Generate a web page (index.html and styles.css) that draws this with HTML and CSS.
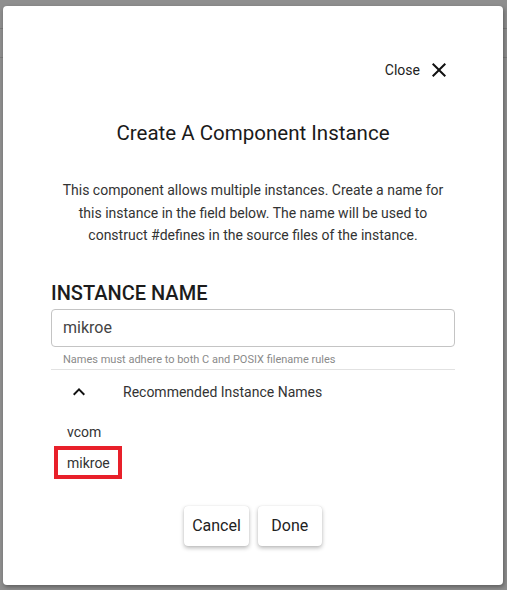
FILE: index.html
```html
<!DOCTYPE html>
<html>
<head>
<meta charset="utf-8">
<link rel="stylesheet" href="styles.css">
</head>
<body>
<div class="backdrop">
  <div class="modal">
    <div class="close-row">
      <button class="close-btn">
        <span>Close</span>
        <svg viewBox="0 0 24 24" width="24" height="24"><path d="M19 6.41L17.59 5 12 10.59 6.41 5 5 6.41 10.59 12 5 17.59 6.41 19 12 13.41 17.59 19 19 17.59 13.41 12z"/></svg>
      </button>
    </div>
    <h1 class="title">Create A Component Instance</h1>
    <p class="desc">This component allows multiple instances. Create a name for this instance in the field below. The name will be used to construct #defines in the source files of the instance.</p>
    <h2 class="label">INSTANCE NAME</h2>
    <div class="input">mikroe</div>
    <div class="helper">Names must adhere to both C and POSIX filename rules</div>
    <div class="divider"></div>
    <div class="rec-head">
      <svg class="chev" viewBox="0 0 24 24" width="24" height="24"><path d="M12 8l-6 6 1.41 1.41L12 10.83l4.59 4.58L18 14z"/></svg>
      <span>Recommended Instance Names</span>
    </div>
    <ul class="names">
      <li class="name">vcom</li>
      <li class="name marked">mikroe</li>
    </ul>
    <div class="actions">
      <button class="btn">Cancel</button>
      <button class="btn">Done</button>
    </div>
  </div>
</div>
</body>
</html>
```

FILE: styles.css
```css
* { box-sizing: border-box; }
html, body { margin: 0; padding: 0; }
body {
  font-family: Roboto, "Noto Sans", sans-serif;
  background: #8e8e8e;
  width: 507px;
  height: 590px;
  overflow: hidden;
}
.backdrop {
  width: 507px;
  height: 590px;
  padding: 6px 0 0 3px;
  background:
    linear-gradient(#7a7a7a, #7a7a7a) 0 28px / 507px 1px no-repeat,
    linear-gradient(#7c7c7c, #7c7c7c) 0 57px / 507px 1px no-repeat,
    #8f8f8f;
}
.modal {
  width: 500px;
  height: 579px;
  background: #fff;
  border-radius: 4px;
  box-shadow: 1px 2px 4px rgba(0,0,0,0.35);
  padding: 0 48px;
  display: flex;
  flex-direction: column;
}
.close-row {
  display: flex;
  justify-content: flex-end;
  margin-top: 52px;
  padding-right: 4px;
}
.close-btn {
  border: 0;
  background: none;
  padding: 0;
  display: flex;
  align-items: center;
  gap: 7px;
  font-family: inherit;
  font-size: 14px;
  color: #222;
  height: 24px;
}
.close-btn svg { fill: #111; }
.title {
  margin: 39px 0 0;
  text-align: center;
  font-size: 20.5px;
  font-weight: 400;
  color: #1a1a1a;
  line-height: 24px;
}
.desc {
  margin: 34px 0 0;
  text-align: center;
  font-size: 14px;
  line-height: 22.5px;
  color: #333;
  padding: 0 4px;
}
.label {
  margin: 34px 0 0;
  font-size: 20px;
  font-weight: 500;
  color: #1c1c1c;
  line-height: 24px;
}
.input {
  margin-top: 4px;
  height: 38px;
  border: 1px solid #c4c4c4;
  border-radius: 4px;
  padding: 0 11px;
  display: flex;
  align-items: center;
  font-size: 16px;
  color: #444;
}
.helper {
  margin-top: 6px;
  padding-left: 12px;
  font-size: 11px;
  line-height: 14px;
  color: #8a8a8a;
}
.divider {
  margin-top: 2px;
  height: 1px;
  background: #e2e2e2;
}
.rec-head {
  display: flex;
  align-items: center;
  height: 44px;
  padding-left: 16px;
  font-size: 14px;
  color: #333;
}
.chev { fill: #111; margin-right: 32px; }
.names {
  list-style: none;
  margin: 0;
  padding: 0;
}
.name {
  font-size: 14px;
  color: #333;
  height: 28px;
  line-height: 28px;
  padding-left: 16px;
}
.names .name:first-child { margin-top: 4px; }
.marked {
  width: 68px;
  margin-left: 3px;
  padding: 2px 0 0 9px;
  border: 4px solid #e8202a;
  line-height: 23px;
  height: 33px;
}
.actions {
  display: flex;
  justify-content: center;
  gap: 9px;
  margin-top: 27px;
}
.btn {
  border: 0;
  background: #fff;
  border-radius: 4px;
  height: 40px;
  min-width: 64px;
  padding: 0 8px;
  font-family: inherit;
  font-size: 16px;
  color: #222;
  box-shadow: 0 2px 4px rgba(0,0,0,0.28), 0 0 1px rgba(0,0,0,0.15);
}
```
